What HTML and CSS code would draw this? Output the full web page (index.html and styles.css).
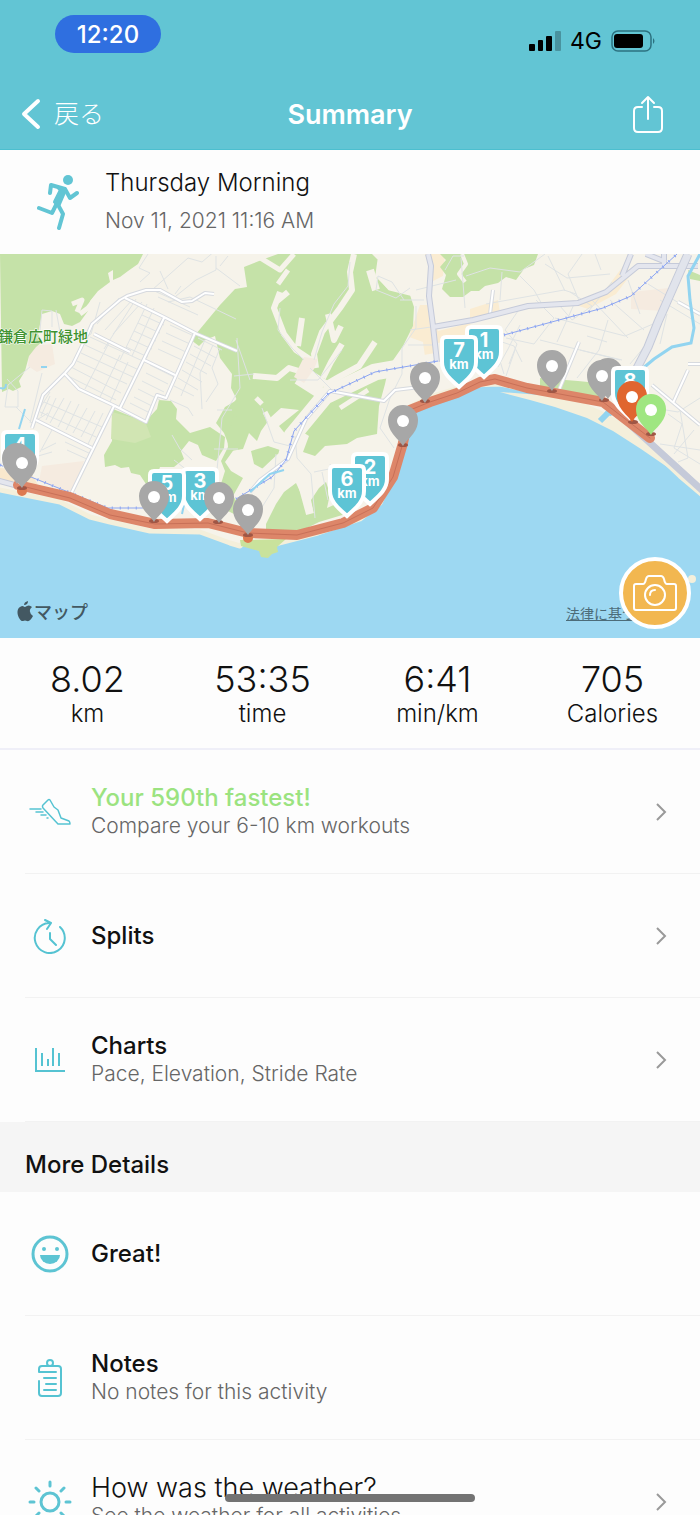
FILE: index.html
```html
<!DOCTYPE html>
<html lang="en">
<head>
  <meta charset="UTF-8">
  <meta name="viewport" content="width=device-width, initial-scale=1.0">
  <title>Summary</title>
  <link rel="stylesheet" href="styles.css">
</head>
<body>
  <div class="screen">
    <header class="header">
      <div class="status-bar">
        <span class="clock">12:20</span>
        <div class="status-icons">
          <svg width="32" height="22" viewBox="0 0 32 22">
            <rect x="0" y="14" width="6" height="7" rx="1"/>
            <rect x="9" y="10" width="5" height="11" rx="1"/>
            <rect x="17" y="6" width="6" height="15" rx="1"/>
            <rect x="26" y="1" width="6" height="20" rx="1" opacity="0.25"/>
          </svg>
          <span class="network">4G</span>
          <svg width="45" height="22" viewBox="0 0 45 22">
            <rect x="1" y="1" width="39" height="20" rx="6" fill="none" stroke="#2c7280" stroke-width="1.5"/>
            <rect x="3" y="4" width="29" height="14" rx="3"/>
            <path d="M42 8q3 3 0 6z" fill="#2c7280"/>
          </svg>
        </div>
      </div>
      <nav class="nav-bar">
        <a href="#" class="back-link" lang="ja">
          <svg width="20" height="32" viewBox="0 0 20 32" fill="none" stroke="#fff" stroke-width="4" stroke-linecap="round" stroke-linejoin="round">
            <path d="M17 3L3 16l14 13"/>
          </svg>
          戻る
        </a>
        <h1 class="nav-title">Summary</h1>
        <button class="share-button" aria-label="Share">
          <svg width="32" height="40" viewBox="0 0 32 40" fill="none" stroke="#fff" stroke-width="2" stroke-linecap="round" stroke-linejoin="round">
            <path d="M10 13H6q-4 0-4 4v17q0 4 4 4h20q4 0 4-4V17q0-4-4-4h-4M16 25V3M10 9l6-6 6 6"/>
          </svg>
        </button>
      </nav>
    </header>

    <section class="activity">
      <svg class="runner" width="44" height="56" viewBox="0 0 44 56" fill="none" stroke="#62c5d4" stroke-width="4" stroke-linecap="round" stroke-linejoin="round">
        <circle cx="31" cy="6" r="5" fill="#62c5d4" stroke="none"/>
        <path d="M13 19l1-8 14 4 5 9 7-5M2 34l13 5 5-10 6 11-4 14"/>
        <path d="M22 14l6 2-6 14-4-2 6-12z" fill="#62c5d4"/>
      </svg>
      <div>
        <h2 class="activity-title">Thursday Morning</h2>
        <p class="activity-date">Nov 11, 2021 11:16 AM</p>
      </div>
    </section>

    <section class="map">
      <svg class="map-canvas" viewBox="0 254 700 384" preserveAspectRatio="xMidYMid slice">
        <defs>
          <g id="pin">
            <path d="M0 0C-4-7-15-13-15-26a15 15 0 0 1 30 0C15-13 4-7 0 0z"/>
            <circle cy="-25" r="6" fill="#fff"/>
          </g>
          <path id="shield" d="M-13 0H13Q17 0 17 4V25C17 37 6 44 0 50C-6 44-17 37-17 25V4Q-17 0-13 0z"/>
          <path id="streets" d="M32 428l11-33 22-22 8-9 15-31 4-9 28-24 7-4 19-6h14l22 12 10-1 13-8 9 1M125 298l39 19 33 17 40 17M65 374l14 15 36 17 31 16 11-27 9 3 29-65M164 318l-44 90M94 334l36 18M144 360l31 15M36 420l56 28M114 406l-44 90M250 492l10-12 28-21 18-40 24-28 54 10 11-11 33-4M493 290l-3 24M579 342l-20 48M678 302l22 12M688 364h12M688 370l-15 33M652 385l48 40"/>
          <path id="main-roads" d="M428 254l3 12-2 30 4 30 4 36M433 327l40-7 55-14 50-3 28-11 32-26h60M622 276l9-22M646 254l20 8M664 254v12M-4 480l26 7M605 402l99 90"/>
          <path id="highway" d="M688 254l-8 18-22 50-10 25-26 50"/>
          <path id="railway" d="M0 465l36 14 72 29h35M236 499l36-22 14-17 8-29 34-37 47-22 63-11M504 335l99-27 28-12 46-42"/>
        </defs>

        <!-- land -->
        <rect y="254" width="700" height="384" fill="#f6f3ea"/>
        <g fill="#f5ebe0">
          <path d="M30 346l22-2 3 20-18 8-9-6zM42 466l42-5-12 34-33-14zM631 292l38-4-6 23-32-2z"/>
          <path d="M425 254h20l-2 22-10 5zM420 305h10l8 26 32-8 4 12-36 8v22l-11 7-4-30-14-5zM470 309l28-9 2 12-30 6zM600 297l24-32 8 8-16 21-28 15-12-4z" fill="#faecd2"/>
          <path d="M0 468l30 3 8 14-38-2z" fill="#f9e8cd"/>
        </g>

        <!-- woods -->
        <g fill="#c5e2a8">
          <path d="M0 254H143l-5 10-10 7-8 6-7 3v-10l-5 3 2 9-12 9-8 10-2 10-8 11-8 4-8-2-4-10-8-3-10 3-4 20 4 8-6 5-7 9-4 15-6 10 2 6-8 4-4-2-7 3z"/>
          <path d="M113 409l32 13 12-13 2-9 12 1 6 8-1 10 14 14 20-6 15 10-1 11-8 13-14-6-4-10-9-4-8 10 3 8-10 8-14 0-4 12-10 5-6-9-9-2-2-6-8 1-6-3-10 2-1-12 8-14z"/>
          <path d="M220 305l15-16 12-2-3-20 20-8 14-5H372l8 8-5 14 12 12 23 7 4 12-1 19-10 20-14 20-4 18-6 22-2 28-20 4-10 6-22 2-10 10-12-4 6-16-8-5-14 5-8-10 20-16-18-2-10 9-10 14-4 10-8-8-6 16-12 2-7-18-8-10 9-16 12-7-6-12 1-14-12-16-5-22-10 4-6 6-8-6z"/>
          <path d="M240 394l-10 14 7 8-11 18 9 14-10 14 6 9 12 7-10 18 7 10-6 8-10-5-4-22 5-16-4-10 7-14-1-12 6-18z"/>
          <path d="M251 451l17-5 18 6-6 13-13 6-13-7zM266 524l10-20 8-12 12-9 8 17 9 10-2-10 8-12 7-6 4 12-3 14 9-4 8-7 13 6-8 10-30 9-18 9-35 1z"/>
          <path d="M440 254h98l-4 11-10 4-8 11-10-3-8 6-13 3-6 5-8 0-8 6-13 0-8-8 4-14-6-8 6-7z"/>
          <path d="M540 378l38 3 20 2 4 15-62-11zM688 270l12 5v6l-10-2z"/>
          <path d="M112 412l33 9 6 16-16 6-24-4z" fill="#d1e5b3"/>
        </g>

        <!-- valleys between the hills -->
        <g fill="none" stroke="#f6f3ea" stroke-width="7" stroke-linejoin="round">
          <path d="M354 254l-4 18 2 18-12 18-18 24-8 22 2 14M280 292l-6 16 10 26 12 16 18 12M288 292l-12 10M328 314l6 26 7-14M302 318l-4 28M342 344l-11 18-8 16M375 342l-16 24-22 12-14 8M253 376l24 2 12-10 20 6" stroke-width="6"/>
          <path d="M380 260l-2 14 12 14 24 6M254 254l26 16 14-16M278 284l10-14M340 408l28-18M265 412l14 26 10 4M262 404l-6-6" stroke-width="5"/>
          <path d="M438 361l-63 11-50 24-33 40-6 22-34 32" stroke-width="17"/>
          <path d="M300 375l22 14" stroke-width="20"/>
          <path d="M72 304l10-4-5 12M96 298l-8 10-8 6" stroke-width="5"/>
          <path d="M288 456l10 14 12 44M298 472l30-8M278 492l-20 30M328 464l12 26M370 270l6 20" stroke-width="8"/>
          <path d="M462 254l4 10-7 10 6 8" stroke-width="4"/>
        </g>
        <path d="M304 357l14 2-4 10-10 14-10-6z" fill="#f5ebe0"/>

        <!-- side streets -->
        <g fill="none" stroke="#dfe3e4" stroke-width="1">
          <path d="M97 324l22-26M105 330l28-31M113 334l29-32M90 337l55 25M85 345l54 25M81 353l52 24M77 361l50 23M71 367l50 26M68 376l48 24M128 362l-18 40M120 355l-20 42M109 343l-24 46"/>
          <path d="M147 304l-27 56M136 299l-32 50M142 315l22 10M138 323l22 10M134 331l22 10M130 339l22 10M126 347l22 10M154 308l-22 48M170 325l24 11M166 333l24 11M162 341l24 11M158 349l24 11M150 365l24 12M146 373l22 11M142 381l22 11M138 389l22 11M134 397l20 10M130 403l22 11"/>
          <path d="M50 396l-9 20M56 398l-10 22M64 398l-14 25M71 401l-13 26M79 404l-13 26M87 408l-14 25M95 411l-14 26M103 413l-15 31M44 402l58 25M40 412l56 25M40 408l10-16M52 430l-12 22M65 442l26 12M67 450l22 10"/>
          <path d="M198 338l24 12M194 346l22 12M190 354l21 12M186 362l21 12M182 370l20 12M178 378l20 12M174 386l20 10M205 340l-24 56M213 345l-13 28 2 36M220 348l-8 20 6 16-12 18M170 400l18 8 5 8M150 289l40 18M158 297l40 18M168 302l22-5 46 22M148 254l-9 14 11 5-10 9M152 290l36-32 14 4 14-12M181 286l-6 8M160 271l8 18M216 256l0 14-20 10-20 16M216 268l24 18M228 256l-8 10M237 338l3 50-18 30-5 52M232 410l-15 0M214 449h24M100 302l-9 32-12 6M30 367l-22 18-3 22 13 0 0-16-11-12M42 373l-12 50M16 407l16 16 16-10"/>
          <path d="M40 330l2-20 10 1 0 16M56 310l4 22M42 450l14-7M38 456l14-4M174 460l18 14M172 435l8 14 12 11M280 308l-2 22 14 18 12 12M350 262l-2 24-14 18-12 28-8 28M310 368l24 24M342 350l-24 30-28 0M236 340l14 40M234 376l20-2M262 408l12 34 16 4M295 436l2 22 14 16 4 44M314 472l30-6M322 472l6 28M330 464l12 30M276 454l-2 34-20 32M404 300l-12-18-14-6-2 14 20 8 14-10M416 290l40-10M416 306v22l-14 20 0 26-12 24-10 30 14 20M410 330l28-4M408 345h30M424 300h-24"/>
          <path d="M445 270l8-14 11 0M465 308l-4-50M466 276l24-8 30 4 25-18M486 304l78-14 12 4M500 300l2-28M520 308l-15 22 12 14-8 20M520 325l-12 24-10 18M536 300l18 18-20 26-28-6M560 306l12 14 20-14-22-14M555 318l70 18 28-12M540 340l80 20M575 302l-18 40M608 320l-9 30-22 28M592 300l36 38M610 300l34 30M582 254l-14 20 12 29M545 264l22 14 43-4M548 256l17 35M520 276l14 14 10 18M595 254l6 16M628 280l12 34M588 312l24-30M648 284l52 32M660 300l40 24M667 314l-7 30M650 340l-20 24M580 350l42 10M587 336l20 6M502 342l12 4 8 16M515 350l-9 26M496 348l8 26M668 414l14 10-8 24 26 16M680 410l8 48-10 4M694 430l-20 24M700 450l-40-6M654 408l24 4 22-14"/>
        </g>

        <!-- roads -->
        <g fill="none" stroke-linejoin="round">
          <use href="#streets" stroke="#d7dadf" stroke-width="4"/>
          <use href="#streets" stroke="#fff" stroke-width="2"/>
          <use href="#main-roads" stroke="#c5cad9" stroke-width="6"/>
          <use href="#main-roads" stroke="#e4e6ee" stroke-width="4"/>
          <use href="#highway" stroke="#c5cad9" stroke-width="9"/>
          <use href="#highway" stroke="#e1e4ec" stroke-width="7"/>
          <use href="#railway" stroke="#8ca5f2" stroke-width="1"/>
          <use href="#railway" stroke="#8ca5f2" stroke-width="3" stroke-dasharray="1 7"/>
        </g>

        <!-- rivers -->
        <g fill="none" stroke="#92d4f0" stroke-width="3">
          <path d="M700 254l-12 22 2 24 4 28-3 15-19 4-18 12-12 10"/>
          <path d="M25 409l-6 20M250 492l20-18 14-4M182 514l3-14M41 367h6M0 388q6 2 6-4M478 384v14M487 384v12" stroke-width="2"/>
          <path d="M598 424l14-14" stroke-width="7"/>
        </g>

        <!-- sea -->
        <path d="M-20 486l40 8 40 8 30 15 20 5 40 9 50 1 30 11 10 3 4-4 15 6 20-5 39-10 42-14 20-16 12-25 12-40 4-30 22-11 40-12 30-1 40 8 30 8 28 12 22 12 25 19 35 33 40 34v160H-20z" fill="#9dd8f2" stroke="#f4efdb" stroke-width="5" stroke-linejoin="round"/>
        <path d="M240 540l46-1-9 8 1 5-6 2-4 4-7-1-2-6-18-5z" fill="#c9e29c"/>
        <path d="M500 392l40 3 45 8 24 14 14 8 20 18 30 28-32-22-28-18-26-13-32-11-25-7z" fill="#f4efdb"/>
        <path d="M600 421l12-12" stroke="#92d4f0" stroke-width="6"/>
        <use href="#main-roads" fill="none" stroke="#c5cad9" stroke-width="7" clip-path="inset(150px 0 0 620px)"/>
        <circle cx="692" cy="579" r="4" fill="#f4efdb"/>

        <!-- route -->
        <g fill="none" stroke-linecap="round" stroke-linejoin="round">
          <path d="M18 485l52 12 40 17 45 10 53-1 40 10 49 2 46-12 30-15 20-31 10-34 7-33 20-8 27-9 23-11 15-3 32 9 76 14 47 36" stroke="#dd8669" stroke-width="10"/>
          <path d="M22 486l48 12 40 17 45 9 53-1 40 10 49 2 46-12 30-15 20-31 10-34 7-33 20-8 27-9 23-11 15-3 32 9 76 14 47 36" stroke="#c87058" stroke-width="1"/>
          <path d="M22 490v1M248 537v1" stroke="#dd7a50" stroke-width="10"/>
        </g>
        <g fill="#9f5645">
          <ellipse cx="22" cy="488" rx="5" ry="2"/>
          <ellipse cx="154" cy="521" rx="5" ry="2"/>
          <ellipse cx="218" cy="522" rx="5" ry="2"/>
          <ellipse cx="248" cy="535" rx="5" ry="2"/>
          <ellipse cx="403" cy="445" rx="5" ry="2"/>
          <ellipse cx="425" cy="401" rx="5" ry="2"/>
          <ellipse cx="552" cy="391" rx="5" ry="2"/>
          <ellipse cx="604" cy="400" rx="5" ry="2"/>
          <ellipse cx="633" cy="422" rx="5" ry="2"/>
          <ellipse cx="651" cy="434" rx="5" ry="2"/>
        </g>

        <!-- kilometre shields and pins -->
        <g class="shield" transform="translate(20 432)"><use href="#shield"/><text y="20">4</text></g>
        <use href="#pin" x="17" y="484" fill="#a7a7a7"/>
        <use href="#pin" x="22" y="488" fill="#a7a7a7"/>
        <g class="shield" transform="translate(200 469)"><use href="#shield"/><text y="19">3</text><text class="unit" y="31">km</text></g>
        <g class="shield" transform="translate(167 471)"><use href="#shield"/><text y="19">5</text><text class="unit" y="31">km</text></g>
        <use href="#pin" x="154" y="522" fill="#a7a7a7"/>
        <use href="#pin" x="219" y="523" fill="#a7a7a7"/>
        <use href="#pin" x="248" y="535" fill="#a7a7a7"/>
        <g class="shield" transform="translate(370 454)"><use href="#shield"/><text y="20">2</text><text class="unit" y="32">km</text></g>
        <g class="shield" transform="translate(347 466)"><use href="#shield"/><text y="20">6</text><text class="unit" y="32">km</text></g>
        <use href="#pin" x="403" y="446" fill="#a7a7a7"/>
        <use href="#pin" x="425" y="403" fill="#a7a7a7"/>
        <g class="shield" transform="translate(484 327)"><use href="#shield"/><text y="20">1</text><text class="unit" y="32">km</text></g>
        <g class="shield" transform="translate(459 337)"><use href="#shield"/><text y="20">7</text><text class="unit" y="32">km</text></g>
        <use href="#pin" x="552" y="391" fill="#a7a7a7"/>
        <use href="#pin" x="608" y="399" fill="#a7a7a7"/>
        <use href="#pin" x="602" y="401" fill="#a7a7a7"/>
        <g class="shield" transform="translate(630 368)"><use href="#shield"/><text y="20">8</text></g>
        <use href="#pin" x="632" y="422" fill="#e0662f"/>
        <use href="#pin" x="651" y="435" fill="#9fe681"/>

        <text class="place" x="-2" y="342" lang="ja">鎌倉広町緑地</text>
        <path d="M25 607q4-3 7 0-5 4 1 9-3 6-6 5-2-1-4 0c-4 1-10-14 0-15q1 1 2 1zM24 605q0-3 4-4 0 4-4 4z" fill="#435862"/>
        <text class="map-brand" x="34" y="619" lang="ja">マップ</text>
      </svg>
      <a href="#" class="legal-link" lang="ja">法律に基づ</a>
      <button class="camera-button" aria-label="Add photo">
        <svg width="46" height="38" viewBox="0 0 46 38" fill="none" stroke="#fff" stroke-width="2" stroke-linejoin="round">
          <path d="M4 10h7q2 0 3-5 1-3 3-3h12q2 0 3 3 1 5 3 5h7q2 0 2 2v22q0 2-2 2H4q-2 0-2-2V12q0-2 2-2z"/>
          <circle cx="23" cy="21" r="10"/>
          <path d="M18 21q0-5 5-5" stroke-linecap="round"/>
        </svg>
      </button>
    </section>

    <section class="stats">
      <div class="stat"><strong>8.02</strong><span>km</span></div>
      <div class="stat"><strong>53:35</strong><span>time</span></div>
      <div class="stat"><strong>6:41</strong><span>min/km</span></div>
      <div class="stat"><strong>705</strong><span>Calories</span></div>
    </section>

    <main>
      <a href="#" class="row">
        <span class="row-icon">
          <svg width="42" height="28" viewBox="0 0 42 28" fill="none" stroke="#55c3d2" stroke-width="1.5" stroke-linecap="round" stroke-linejoin="round">
            <path d="M14 7l5-5q1-1 2 0l4 7 4 3 3 8 8 3q1 1 1 3H29L14 10q-1-2 0-3zM1 11h11M7 14h7M12 17h5M18 20h1"/>
          </svg>
        </span>
        <span class="row-text">
          <strong class="row-title best">Your 590th fastest!</strong>
          <span class="row-sub">Compare your 6-10 km workouts</span>
        </span>
        <svg class="arrow" width="12" height="20" viewBox="0 0 12 20"><path d="M2 2l8 8-8 8"/></svg>
      </a>
      <a href="#" class="row">
        <span class="row-icon">
          <svg width="34" height="36" viewBox="0 0 34 36" fill="none" stroke="#55c3d2" stroke-width="2" stroke-linecap="round" stroke-linejoin="round">
            <path d="M27 9A15 15 0 1 1 16 5M12 2l6 3-4 6M17 15v6l6 6"/>
          </svg>
        </span>
        <span class="row-text"><strong class="row-title">Splits</strong></span>
        <svg class="arrow" width="12" height="20" viewBox="0 0 12 20"><path d="M2 2l8 8-8 8"/></svg>
      </a>
      <a href="#" class="row">
        <span class="row-icon">
          <svg width="30" height="26" viewBox="0 0 30 26" fill="none" stroke="#55c3d2" stroke-width="2">
            <path d="M1 1v23h29M7 6v13M13 12v7M18 1v18M24 6v13"/>
          </svg>
        </span>
        <span class="row-text">
          <strong class="row-title">Charts</strong>
          <span class="row-sub">Pace, Elevation, Stride Rate</span>
        </span>
        <svg class="arrow" width="12" height="20" viewBox="0 0 12 20"><path d="M2 2l8 8-8 8"/></svg>
      </a>

      <h3 class="section-title">More Details</h3>

      <div class="row">
        <span class="row-icon">
          <svg width="38" height="38" viewBox="0 0 38 38">
            <circle cx="19" cy="19" r="17" fill="none" stroke="#5dc4d3" stroke-width="3"/>
            <path d="M9 20h20a10 9 0 0 1-20 0z" fill="#5dc4d3"/>
            <circle cx="13" cy="14" r="2" fill="#5dc4d3"/>
            <circle cx="26" cy="14" r="2" fill="#5dc4d3"/>
          </svg>
        </span>
        <span class="row-text"><strong class="row-title">Great!</strong></span>
      </div>
      <div class="row">
        <span class="row-icon">
          <svg width="26" height="38" viewBox="0 0 26 38" fill="none" stroke="#55c3d2" stroke-width="2" stroke-linecap="round" stroke-linejoin="round">
            <circle cx="13" cy="4" r="3"/>
            <path d="M19 13H2v-3q0-3 3-3h16q3 0 3 3v24q0 3-3 3H5q-3 0-3-3V22M7 19h12M9 25h10M7 31h12"/>
          </svg>
        </span>
        <span class="row-text">
          <strong class="row-title">Notes</strong>
          <span class="row-sub">No notes for this activity</span>
        </span>
      </div>
      <a href="#" class="row">
        <span class="row-icon">
          <svg width="44" height="44" viewBox="0 0 44 44" fill="none" stroke="#5dc4d3" stroke-width="3" stroke-linecap="round">
            <circle cx="22" cy="22" r="9"/>
            <path d="M22 2v4M22 38v4M2 22h4M38 22h4M8 8l3 3M33 33l3 3M36 8l-3 3M8 36l3-3"/>
          </svg>
        </span>
        <span class="row-text">
          <span class="row-question">How was the weather?</span>
          <span class="row-sub">See the weather for all activities</span>
        </span>
        <svg class="arrow" width="12" height="20" viewBox="0 0 12 20"><path d="M2 2l8 8-8 8"/></svg>
      </a>
    </main>
  </div>
  <div class="home-indicator"></div>
</body>
</html>
```
FILE: styles.css
```css
* {
  box-sizing: border-box;
}

body {
  margin: 0;
  background: #fdfdfd;
  color: #111;
  font-family: Inter, "Noto Sans CJK JP", sans-serif;
}

h1, h2, h3, p {
  margin: 0;
}

a {
  color: inherit;
  text-decoration: none;
}

button {
  padding: 0;
  border: none;
  background: none;
  cursor: pointer;
}

svg {
  display: block;
  flex-shrink: 0;
}

.screen {
  height: 100vh;
  overflow-y: auto;
  scrollbar-width: none;
}

/* header */
.header {
  background: #62c5d4;
  border-bottom: 1px solid #4cbfcf;
}

.status-bar {
  display: flex;
  justify-content: space-between;
  height: 79px;
  padding: 15px 44px 0 55px;
}

.clock {
  width: 106px;
  height: 38px;
  border-radius: 19px;
  background: #2f6fe0;
  color: #fff;
  font-size: 24px;
  font-weight: 500;
  line-height: 40px;
  text-align: center;
}

.status-icons {
  display: flex;
  align-items: center;
  gap: 9px;
  height: 52px;
  color: #000;
}

.network {
  font-size: 23px;
}

.nav-bar {
  display: grid;
  grid-template-columns: 1fr auto 1fr;
  align-items: center;
  height: 70px;
  padding: 0 36px 0 21px;
  color: #fff;
}

.back-link {
  display: flex;
  align-items: center;
  gap: 13px;
  font-size: 25px;
  font-weight: 300;
  line-height: 32px;
}

.nav-title {
  padding-left: 15px;
  font-size: 27px;
  font-weight: 600;
}

.share-button {
  justify-self: end;
}

/* activity */
.activity {
  display: flex;
  align-items: center;
  gap: 24px;
  height: 104px;
  padding: 0 37px;
}

.activity-title {
  font-size: 24px;
  font-weight: 300;
  line-height: 38px;
}

.activity-date {
  color: #666;
  font-size: 21px;
  font-weight: 300;
  line-height: 38px;
}

/* map */
.map {
  position: relative;
}

.map-canvas {
  width: 100%;
  aspect-ratio: 700 / 384;
}

.shield {
  fill: #5dc4d5;
  stroke: #fff;
  stroke-width: 4px;
}

.shield text {
  fill: #fff;
  stroke: none;
  font-size: 20px;
  font-weight: 700;
  text-anchor: middle;
}

.shield .unit {
  font-size: 13px;
}

.place {
  fill: #3f9330;
  stroke: #fff;
  stroke-width: 1px;
  paint-order: stroke;
  font-size: 15px;
  font-weight: 500;
}

.map-brand {
  fill: #435862;
  font-size: 18px;
  font-weight: 500;
}

.legal-link {
  position: absolute;
  right: 64px;
  bottom: 14px;
  color: #4c6c79;
  font-size: 14px;
  line-height: 20px;
  text-decoration: underline;
}

.camera-button {
  position: absolute;
  right: 9px;
  bottom: 9px;
  display: flex;
  align-items: center;
  justify-content: center;
  width: 72px;
  height: 72px;
  border: 4px solid #fff;
  border-radius: 50%;
  background: #f2b750;
}

/* stats */
.stats {
  display: grid;
  grid-template-columns: repeat(4, 1fr);
  height: 112px;
  padding-top: 20px;
  border-bottom: 2px solid #efeff8;
  text-align: center;
}

.stat strong,
.stat span {
  display: block;
  font-weight: 300;
}

.stat strong {
  font-size: 36px;
  line-height: 42px;
}

.stat span {
  font-size: 24px;
  line-height: 28px;
}

/* rows */
.row {
  display: flex;
  align-items: center;
  gap: 16px;
  height: 124px;
  margin-left: 25px;
  padding-right: 33px;
  border-bottom: 1px solid #f2f2f2;
}

.row-icon {
  display: flex;
  justify-content: center;
  width: 50px;
}

.row-text {
  display: flex;
  flex: 1;
  flex-direction: column;
}

.row-title {
  font-size: 24px;
  font-weight: 500;
  line-height: 28px;
}

.best {
  color: #9be380;
}

.row-question {
  font-size: 27px;
  font-weight: 300;
  line-height: 28px;
}

.row-sub {
  color: #666;
  font-size: 21px;
  font-weight: 300;
  line-height: 27px;
}

.arrow {
  fill: none;
  stroke: #999;
  stroke-width: 2px;
}

.section-title {
  height: 70px;
  padding: 16px 25px 0;
  background: #f5f5f5;
  font-size: 24px;
  font-weight: 500;
  line-height: 54px;
}

.home-indicator {
  position: fixed;
  bottom: 13px;
  left: 50%;
  width: 250px;
  height: 8px;
  border-radius: 4px;
  background: #737373;
  transform: translateX(-50%);
}
```
